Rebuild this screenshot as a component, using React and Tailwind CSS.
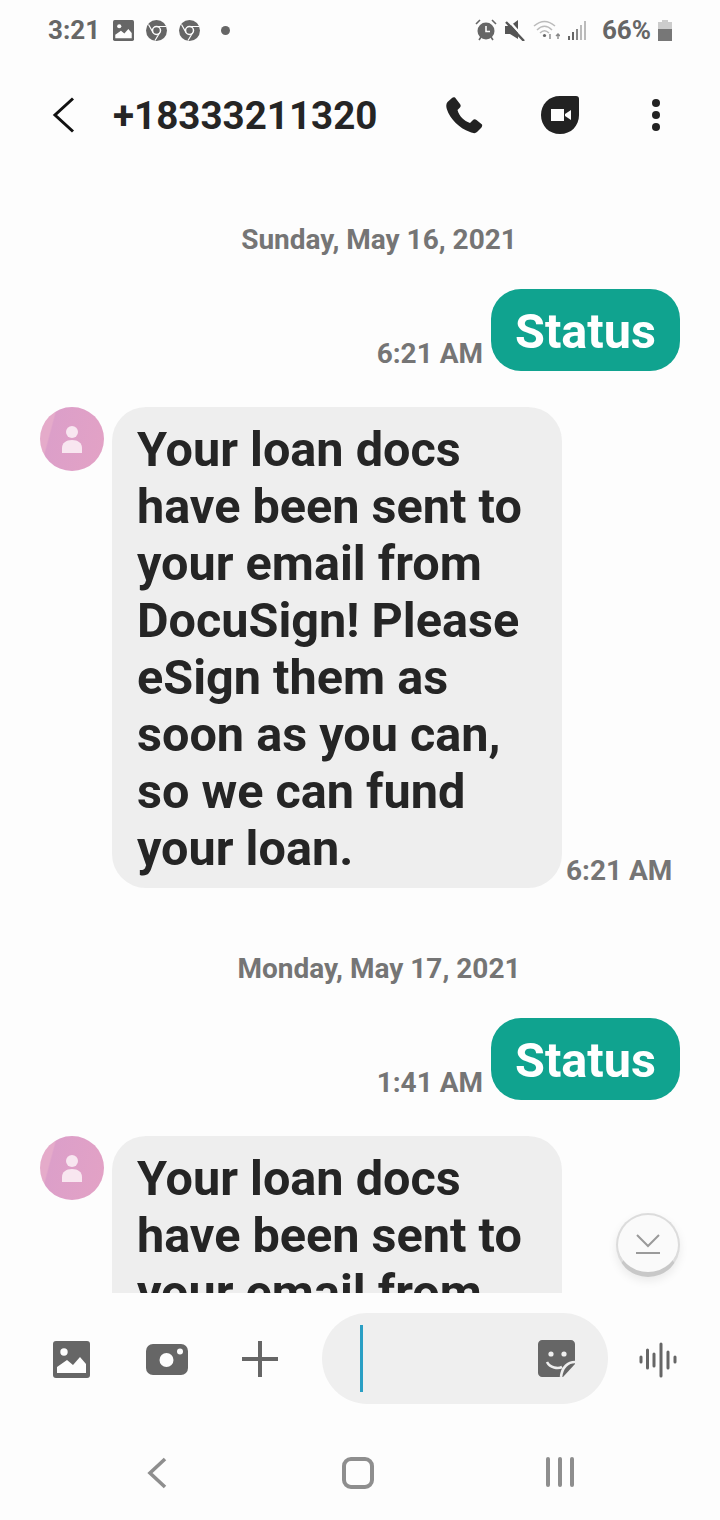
const FONT = 'font-["Roboto","Liberation_Sans",sans-serif]'

function Chrome() {
  return (
    <svg width="21" height="21" viewBox="0 0 21 21" fill="none">
      <circle cx="10.5" cy="10.5" r="10.5" fill="#666" />
      <circle cx="10.5" cy="10.5" r="4" fill="#666" stroke="#fdfdfd" strokeWidth="1.5" />
      <path d="M10.5 6.500H20M7 12.500L2.500 4.500M13.800 12.500L9 20.500" stroke="#fdfdfd" strokeWidth="1.2" />
    </svg>
  )
}

function PictureIcon({ size, color = '#666' }) {
  return (
    <svg width={size} height={size} viewBox="0 0 37 37">
      <rect width="37" height="37" rx="3" fill={color} />
      <circle cx="11" cy="11" r="3.700" fill="#fdfdfd" />
      <path d="M4 32V26L14 19L20 24L27 16L33 23V32Z" fill="#fdfdfd" />
    </svg>
  )
}

function StatusBar() {
  return (
    <div className="h-[60px] flex items-center pl-[48px] pr-[48px] text-[#666] shrink-0">
      <span className="text-[26px] font-bold w-[51px] leading-none whitespace-nowrap">3:21</span>
      <div className="ml-[14px] flex items-center gap-[12px]">
        <PictureIcon size={21} />
        <Chrome />
        <Chrome />
      </div>
      <div className="ml-[21px] w-[9px] h-[9px] rounded-full bg-[#666]" />
      <div className="ml-auto flex items-center">
        <svg width="22" height="22" viewBox="0 0 22 22">
          <circle cx="11" cy="12" r="8.500" fill="#666" />
          <path d="M11 7V12.500H15" stroke="#fdfdfd" strokeWidth="1.6" fill="none" />
          <path d="M1 5L5 1M21 5L17 1M4 21L6 18M18 21L16 18" stroke="#666" strokeWidth="1.6" />
        </svg>
        <svg className="ml-[8px]" width="20" height="21" viewBox="0 0 20 21">
          <path d="M0 6H5L13 0V19L5 14H0Z" fill="#555" />
          <path d="M3 0L20 19" stroke="#fdfdfd" strokeWidth="2.500" />
          <path d="M1 2L19 21" stroke="#555" strokeWidth="2.400" />
        </svg>
        <svg className="ml-[8px]" width="27" height="20" viewBox="0 0 27 20" fill="none">
          <path d="M1 6C8 0 15 0 22 6M4 10C9 5 14 5 19 10M7 13C10 10 13 10 16 13" stroke="#bbb" strokeWidth="1.5" />
          <circle cx="11.500" cy="15.500" r="1.600" fill="#666" />
          <path d="M17 14V19M25 19V14M23 16L25 14L27 16" stroke="#888" strokeWidth="1.4" />
        </svg>
        <svg className="ml-[8px]" width="19" height="20" viewBox="0 0 19 20">
          <rect x="0" y="16" width="2" height="4" fill="#666" />
          <rect x="4" y="12" width="2" height="8" fill="#666" />
          <rect x="8" y="9" width="2" height="11" fill="#888" />
          <rect x="12" y="5" width="2" height="15" fill="#bbb" />
          <rect x="16" y="1" width="2" height="19" fill="#bbb" />
        </svg>
        <span className="ml-[15px] text-[26px] font-bold leading-none whitespace-nowrap">66%</span>
        <svg className="ml-[7px]" width="14" height="21" viewBox="0 0 14 21">
          <path d="M4 0H10V2H14V9H0V2H4Z" fill="#ccc" />
          <rect y="9" width="14" height="12" fill="#777" />
        </svg>
      </div>
    </div>
  )
}

function Header() {
  return (
    <div className="h-[110px] flex items-center shrink-0">
      <svg className="ml-[52px]" width="24" height="36" viewBox="0 0 24 36" fill="none">
        <path d="M21 1.500L3 18L21 34.500" stroke="#111" strokeWidth="3" />
      </svg>
      <span className="ml-[37px] mt-[3px] text-[38.600px] font-bold text-[#252525] leading-none whitespace-nowrap">+18333211320</span>
      <svg className="ml-[68px]" width="37" height="37" viewBox="0 0 37 37">
        <path d="M9 0.500L14 7C15 8.500 15 9.500 13.500 11L11.500 13C13 19 18 24 24 26L26.500 23.500C28 22 29 22 30.500 23L36 27.500C36.500 28.500 36 30 35 31L31 35C29.500 36.500 27.500 36.500 24 35C13 31 4 22 0.800 12C0 9 0 7 1.500 5L6 1C7 0 8 0 9 0.500Z" fill="#222" />
      </svg>
      <svg className="ml-[58px]" width="38" height="38" viewBox="0 0 38 38">
        <path d="M19 0H35C37 0 38 1 38 3V19C38 30 30 38 19 38C8 38 0 30 0 19C0 8 8 0 19 0Z" fill="#222" />
        <path d="M10 13H23V25H10ZM24 18L30 14V24L24 20Z" fill="#fdfdfd" />
      </svg>
      <div className="ml-[73px] flex flex-col gap-[4px]">
        <div className="w-[8px] h-[8px] rounded-full bg-[#222]" />
        <div className="w-[8px] h-[8px] rounded-full bg-[#222]" />
        <div className="w-[8px] h-[8px] rounded-full bg-[#222]" />
      </div>
    </div>
  )
}

function DateLabel({ children, className }) {
  return <div className={`text-center text-[28px] font-bold text-[#757575] leading-[38px] ${className}`}>{children}</div>
}

function SentMessage({ time, className }) {
  return (
    <div className={`flex justify-end items-end pr-[40px] ${className}`}>
      <span className="text-[28px] font-bold text-[#757575] leading-none mr-[8px] mb-[3px] whitespace-nowrap">{time}</span>
      <div className="h-[82px] w-[189px] pt-[5px] rounded-[30px] bg-[#10a38f] text-white text-[48.600px] font-bold flex items-center justify-center leading-none">Status</div>
    </div>
  )
}

function Avatar() {
  return (
    <div className="w-[64px] h-[64px] rounded-full bg-[linear-gradient(105deg,#e5abca_0%,#e5abca_20%,#dc9fc9_22%,#e3a2c5_100%)] flex items-center justify-center shrink-0 ml-[40px]">
      <svg width="20" height="27" viewBox="0 0 20 27">
        <circle cx="10" cy="6" r="6" fill="#f8e6f0" />
        <path d="M0 27V22C0 17 4 14 10 14C16 14 20 17 20 22V27Z" fill="#f8e6f0" />
      </svg>
    </div>
  )
}

function ReceivedMessage({ lines, time, className }) {
  return (
    <div className={`flex items-start ${className}`}>
      <Avatar />
      <div className="ml-[8px] w-[450px] rounded-[34px] bg-[#eeeeee] pl-[25px] pt-[14px] pb-[11px] text-[48.600px] font-bold text-[#252525] leading-[57px] shrink-0">
        {lines.map((l) => <div key={l} className="whitespace-nowrap">{l}</div>)}
      </div>
      {time && <span className="self-end ml-[4px] text-[28px] font-bold text-[#757575] leading-none mb-[3px] whitespace-nowrap">{time}</span>}
    </div>
  )
}

function MessageList() {
  const body = ['Your loan docs', 'have been sent to', 'your email from', 'DocuSign! Please', 'eSign them as', 'soon as you can,', 'so we can fund', 'your loan.']
  return (
    <div className="h-[1123px] overflow-hidden shrink-0 relative">
      <DateLabel className="mt-[50px] pl-[38px] pt-[1px]">Sunday, May 16, 2021</DateLabel>
      <SentMessage time="6:21 AM" className="mt-[30px]" />
      <ReceivedMessage className="mt-[36px]" lines={body} time="6:21 AM" />
      <DateLabel className="mt-[61px] pl-[38px] pt-[1px]">Monday, May 17, 2021</DateLabel>
      <SentMessage time="1:41 AM" className="mt-[30px]" />
      <ReceivedMessage className="mt-[36px]" lines={body} />
      <div className="absolute left-[616px] top-[1043px] w-[64px] h-[64px] rounded-full bg-[#fafafa] border-2 border-[#dcdcdc] border-b-[5px] border-b-[#c8c8c8] shadow-[0_4px_10px_rgba(0,0,0,0.08)] flex items-center justify-center">
        <svg width="26" height="22" viewBox="0 0 26 22" fill="none">
          <path d="M2 2L13 13L24 2M1 20H25" stroke="#9a9a9a" strokeWidth="2" />
        </svg>
      </div>
    </div>
  )
}

function InputBar() {
  return (
    <div className="h-[134px] flex items-center shrink-0 pb-[4px]">
      <div className="ml-[53px] mt-[2px]"><PictureIcon size={37} /></div>
      <svg className="ml-[56px] mt-[2px]" width="42" height="31" viewBox="0 0 42 31">
        <rect width="42" height="31" rx="7" fill="#666" />
        <circle cx="20.500" cy="16" r="7" fill="#fdfdfd" />
        <circle cx="34" cy="7.500" r="3" fill="#fdfdfd" />
      </svg>
      <svg className="ml-[54px] mt-[2px]" width="36" height="36" viewBox="0 0 36 36" fill="none">
        <path d="M18 0V36M0 18H36" stroke="#666" strokeWidth="4" />
      </svg>
      <div className="ml-[44px] w-[286px] h-[91px] rounded-full bg-[#efefef] flex items-center pl-[38px] pr-[33px] justify-between">
        <div className="w-[3px] h-[67px] bg-[#2a9fc4]" />
        <svg width="37" height="37" viewBox="0 0 37 37">
          <path d="M4 0H33C35 0 37 2 37 4V24L25 37H4C2 37 0 35 0 33V4C0 2 2 0 4 0Z" fill="#666" />
          <circle cx="13" cy="14" r="2.600" fill="#efefef" />
          <circle cx="26" cy="14" r="2.600" fill="#efefef" />
          <path d="M9 22C12 28 20 29 24 27M37 22C30 22 24 27 23 37" stroke="#efefef" strokeWidth="2.600" fill="none" />
        </svg>
      </div>
      <svg className="ml-[31px] mt-[3px]" width="38" height="36" viewBox="0 0 38 36" fill="none" stroke="#666" strokeWidth="3" strokeLinecap="round">
        <path d="M2 15V20M8.500 8V26M15 12V24M22 2V34M29 10V26M36 15V20" />
      </svg>
    </div>
  )
}

function NavBar() {
  return (
    <div className="h-[93px] flex items-start shrink-0 pt-[30px]">
      <svg className="ml-[147px]" width="20" height="32" viewBox="0 0 20 32" fill="none">
        <path d="M18 2L3 16L18 30" stroke="#8e8e8e" strokeWidth="3.600" />
      </svg>
      <div className="ml-[175px] w-[32px] h-[32px] rounded-[9px] border-[4px] border-[#8e8e8e]" />
      <div className="ml-[172px] flex gap-[8px]">
        <div className="w-[4px] h-[30px] bg-[#8e8e8e] rounded-full" />
        <div className="w-[4px] h-[30px] bg-[#8e8e8e] rounded-full" />
        <div className="w-[4px] h-[30px] bg-[#8e8e8e] rounded-full" />
      </div>
    </div>
  )
}

export default function App() {
  return (
    <div className={`w-[720px] h-[1520px] bg-[#fdfdfd] flex flex-col overflow-hidden ${FONT}`}>
      <StatusBar />
      <Header />
      <MessageList />
      <InputBar />
      <NavBar />
    </div>
  )
}
